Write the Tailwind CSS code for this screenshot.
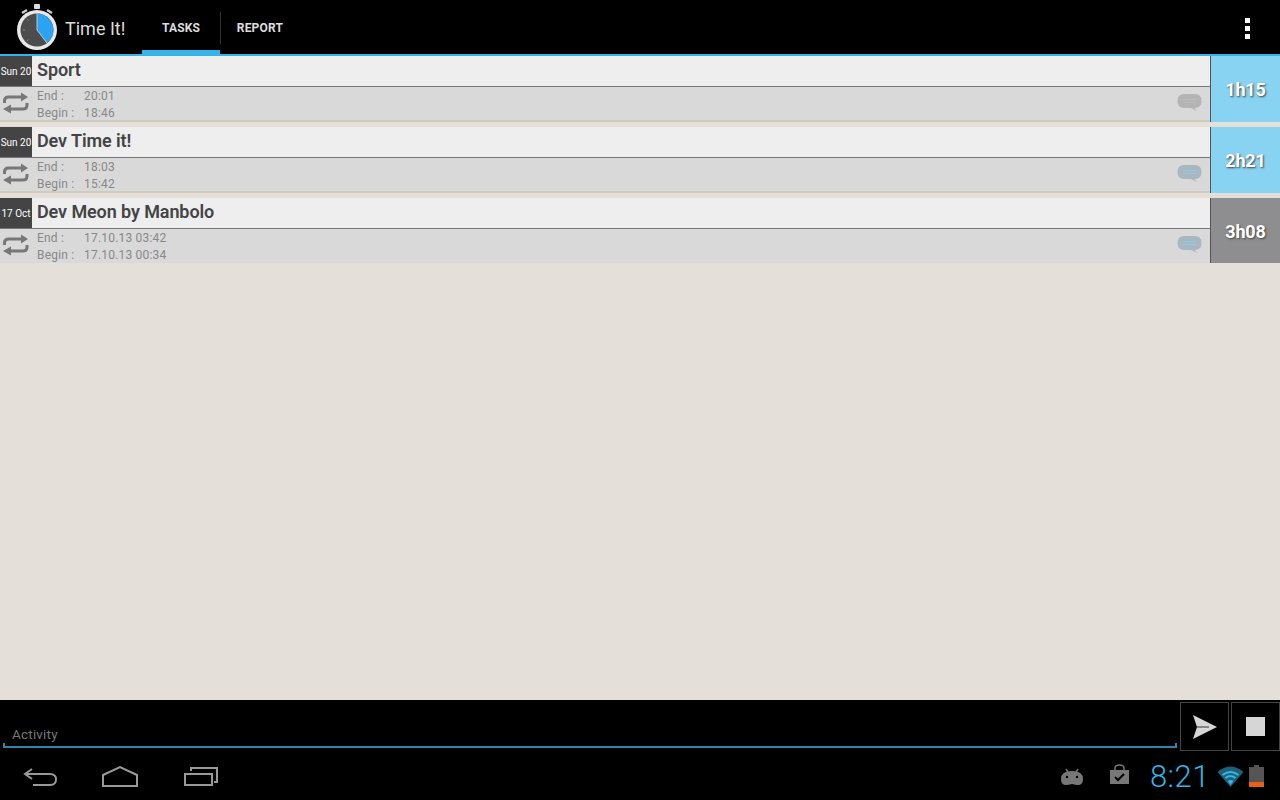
<!DOCTYPE html>
<html lang="en">
<head>
    <meta charset="UTF-8">
    <meta name="viewport" content="width=device-width,initial-scale=1.0">
    <title>Time It!</title>
    <script src="https://cdn.jsdelivr.net/npm/@tailwindcss/browser@4"></script>
</head>
<body class="w-[1280px] h-[800px] overflow-hidden flex flex-col bg-[#e4dfd8] font-['Roboto',sans-serif]">

<!-- Action bar -->
<header class="h-[56px] shrink-0 bg-black border-b-2 border-[#33b5e5] flex items-stretch">
    <svg class="ml-[15px] mt-[3px] w-[44px] h-[49px]" viewBox="0 0 44 49">
        <rect x="19" y="1" width="6" height="5" rx="1" fill="#ddd"/>
        <path d="M7 10l5-3M37 10l-5-3" stroke="#ccc" stroke-width="2.5"/>
        <circle cx="22" cy="27" r="20" fill="#e8e8e8"/>
        <circle cx="22" cy="27" r="16.500" fill="#4d4d4d"/>
        <path d="M22 27V10.500a16.500 16.500 0 0 1 10 29.600z" fill="#2aa4f0"/>
        <path d="M22 10.500V27l10 13.100" fill="none" stroke="#ddd" stroke-width="0.800"/>
        <path d="M8 27h2M12 16l1.500 1.500M12 38l1.500-1.500" stroke="#888" stroke-width="1"/>
    </svg>
    <div class="ml-[6px] w-[77px] pt-[1px] text-[18px] leading-[56px] text-[#dddddd]">Time It!</div>
    <div class="w-[78px] h-[54px] pt-[6px] flex items-center justify-center text-[12px] font-bold tracking-[0.1px] text-[#dddddd] border-b-4 border-[#33b5e5]">TASKS</div>
    <div class="w-px h-[32px] mt-[12px] bg-[#333]"></div>
    <div class="w-[78px] pt-[2px] flex items-center justify-center text-[12px] font-bold tracking-[0.2px] text-[#dddddd]">REPORT</div>
    <div class="ml-auto mr-[30px] mt-[18px] flex flex-col gap-[3px]">
        <span class="w-[5px] h-[5px] bg-white"></span>
        <span class="w-[5px] h-[5px] bg-white"></span>
        <span class="w-[5px] h-[5px] bg-white"></span>
    </div>
</header>

<!-- Task list -->
<main class="flex-1 flex flex-col">
    <!-- Sport -->
    <section class="h-[66px] mb-[5px] flex border-b-2 border-[#cfcbc2] bg-[#d9d9d9]">
        <div class="flex-1 flex flex-col">
            <div class="h-[31px] flex border-b border-[#777] bg-[#eeeeee]">
                <div class="w-[32px] bg-[#444] text-white text-[10px] leading-[31px] text-center whitespace-nowrap">Sun 20</div>
                <div class="pl-[5px] text-[18px] font-semibold tracking-[-0.1px] leading-[28px] text-[#444]">Sport</div>
            </div>
            <div class="flex-1 flex items-start">
                <svg class="w-[32px] h-[32px] shrink-0 mt-[1px]" viewBox="0 0 32 32">
                    <path d="M4.500 15v-2q0-4 4-4H22M27 15v2q0 4-4 4H10" fill="none" stroke="#777" stroke-width="3"/>
                    <path d="M21 4.500l7 4.500-7 4.500zM11 16.500L3 21l8 4.500z" fill="#777"/>
                </svg>
                <div class="pl-[5px] pt-[1px] text-[12px] leading-[17px] text-[#888] tracking-[0.2px]">
                    <div class="flex"><span class="w-[47px]">End :</span><span>20:01</span></div>
                    <div class="flex"><span class="w-[47px]">Begin :</span><span>18:46</span></div>
                </div>
                <svg class="ml-auto mr-[8px] mt-[7px] w-[25px] h-[17px]" viewBox="0 0 25 17">
                    <path d="M7 0h11q6.500 0 6.500 7T18 14h-.500l2.500 3-6-3H7Q.500 14 .500 7T7 0z" fill="#b4b4b4"/>
                    <path d="M6 5.500h13M6 8.500h13" stroke="#bcbcbc"/>
                </svg>
            </div>
        </div>
        <div class="w-[70px] -mb-[2px] border-l border-[#555] bg-[#87d3f1] flex items-center justify-center text-[18px] font-bold tracking-[-0.2px] text-white [text-shadow:1px_1px_2px_#444]">1h15</div>
    </section>

    <!-- Dev Time it! -->
    <section class="h-[66px] mb-[5px] flex border-b-2 border-[#cfcbc2] bg-[#d9d9d9]">
        <div class="flex-1 flex flex-col">
            <div class="h-[31px] flex border-b border-[#777] bg-[#eeeeee]">
                <div class="w-[32px] bg-[#444] text-white text-[10px] leading-[31px] text-center whitespace-nowrap">Sun 20</div>
                <div class="pl-[5px] text-[18px] font-semibold tracking-[-0.1px] leading-[28px] text-[#444]">Dev Time it!</div>
            </div>
            <div class="flex-1 flex items-start">
                <svg class="w-[32px] h-[32px] shrink-0 mt-[1px]" viewBox="0 0 32 32">
                    <path d="M4.500 15v-2q0-4 4-4H22M27 15v2q0 4-4 4H10" fill="none" stroke="#777" stroke-width="3"/>
                    <path d="M21 4.500l7 4.500-7 4.500zM11 16.500L3 21l8 4.500z" fill="#777"/>
                </svg>
                <div class="pl-[5px] pt-[1px] text-[12px] leading-[17px] text-[#888] tracking-[0.2px]">
                    <div class="flex"><span class="w-[47px]">End :</span><span>18:03</span></div>
                    <div class="flex"><span class="w-[47px]">Begin :</span><span>15:42</span></div>
                </div>
                <svg class="ml-auto mr-[8px] mt-[7px] w-[25px] h-[17px]" viewBox="0 0 25 17">
                    <path d="M7 0h11q6.500 0 6.500 7T18 14h-.500l2.500 3-6-3H7Q.500 14 .500 7T7 0z" fill="#a9b8c0"/>
                    <path d="M6 5.500h13M6 8.500h13" stroke="#8fcbe6"/>
                </svg>
            </div>
        </div>
        <div class="w-[70px] -mb-[2px] border-l border-[#555] bg-[#87d3f1] flex items-center justify-center text-[18px] font-bold tracking-[-0.2px] text-white [text-shadow:1px_1px_2px_#444]">2h21</div>
    </section>

    <!-- Dev Meon by Manbolo -->
    <section class="h-[65px] flex bg-[#d9d9d9]">
        <div class="flex-1 flex flex-col">
            <div class="h-[31px] flex border-b border-[#777] bg-[#eeeeee]">
                <div class="w-[32px] bg-[#444] text-white text-[10px] leading-[31px] text-center whitespace-nowrap">17 Oct</div>
                <div class="pl-[5px] text-[18px] font-semibold tracking-[-0.1px] leading-[28px] text-[#444]">Dev Meon by Manbolo</div>
            </div>
            <div class="flex-1 flex items-start">
                <svg class="w-[32px] h-[32px] shrink-0 mt-[1px]" viewBox="0 0 32 32">
                    <path d="M4.500 15v-2q0-4 4-4H22M27 15v2q0 4-4 4H10" fill="none" stroke="#777" stroke-width="3"/>
                    <path d="M21 4.500l7 4.500-7 4.500zM11 16.500L3 21l8 4.500z" fill="#777"/>
                </svg>
                <div class="pl-[5px] pt-[1px] text-[12px] leading-[17px] text-[#888] tracking-[0.2px]">
                    <div class="flex"><span class="w-[47px]">End :</span><span>17.10.13 03:42</span></div>
                    <div class="flex"><span class="w-[47px]">Begin :</span><span>17.10.13 00:34</span></div>
                </div>
                <svg class="ml-auto mr-[8px] mt-[7px] w-[25px] h-[17px]" viewBox="0 0 25 17">
                    <path d="M7 0h11q6.500 0 6.500 7T18 14h-.500l2.500 3-6-3H7Q.500 14 .500 7T7 0z" fill="#a9b8c0"/>
                    <path d="M6 5.500h13M6 8.500h13" stroke="#8fcbe6"/>
                </svg>
            </div>
        </div>
        <div class="w-[70px] pt-[1px] border-l border-[#555] bg-[#8e8e90] flex items-center justify-center text-[18px] font-bold tracking-[-0.2px] text-white [text-shadow:1px_1px_2px_#444]">3h08</div>
    </section>
</main>

<!-- Activity input -->
<div class="h-[50px] shrink-0 bg-black flex">
    <div class="relative w-[1174px] ml-[3px] h-[48px] border-b-2 border-[#2b86ad] pl-[9px] pt-[25px] text-[13.5px] leading-[18px] text-[#777] tracking-[0.2px]">
        Activity
        <span class="absolute left-0 bottom-0 w-[2px] h-[3px] bg-[#2b86ad]"></span>
        <span class="absolute right-0 bottom-0 w-[2px] h-[3px] bg-[#2b86ad]"></span>
    </div>
    <div class="relative z-10 ml-[3px] mt-[2px] h-[49px] flex gap-[2px]">
        <div class="w-[49px] border border-[#444] flex items-center justify-center">
            <svg class="w-[26px] h-[26px]" viewBox="0 0 26 26"><path d="M1 1l24 12L1 25l4-12z" fill="#d6d6d6"/><path d="M5 13h12" stroke="#333"/></svg>
        </div>
        <div class="w-[49px] border border-[#444] flex items-center justify-center">
            <span class="w-[19px] h-[19px] bg-[#d6d6d6]"></span>
        </div>
    </div>
</div>

<!-- System bar -->
<footer class="h-[50px] shrink-0 bg-black flex items-center">
    <svg class="ml-[23px] mt-[4px] w-[36px] h-[24px]" viewBox="0 0 36 24" fill="none" stroke="#999" stroke-width="2">
        <path d="M9 4L2 9l7 5M2 9h25q6 0 6 5.500T27 20H10"/>
    </svg>
    <svg class="ml-[42px] mt-[4px] w-[38px] h-[24px]" viewBox="0 0 38 24" fill="none" stroke="#999" stroke-width="2">
        <path d="M2 10L19 2l17 8v11H2z"/>
    </svg>
    <svg class="ml-[44px] mt-[4px] w-[36px] h-[24px]" viewBox="0 0 36 24" fill="none" stroke="#999" stroke-width="2">
        <path d="M8 6V3h26v14h-3"/><rect x="2" y="9" width="27" height="11"/>
    </svg>
    <svg class="ml-auto mt-[4px] w-[24px] h-[20px]" viewBox="0 0 24 20">
        <path d="M6 2l2 3M18 2l-2 3" stroke="#777" stroke-width="1.500"/>
        <path d="M1 12q0-8 11-8t11 8q0 6-5 6-3 0-6-1-3 1-6 1-5 0-5-6z" fill="#777"/>
        <circle cx="7" cy="10" r="1.200" fill="#000"/><circle cx="17" cy="10" r="1.200" fill="#000"/>
    </svg>
    <svg class="ml-[25px] mb-[2px] w-[21px] h-[21px]" viewBox="0 0 21 21">
        <path d="M1 6h19v14H1z" fill="#777"/>
        <path d="M6 6V4q0-3 4.500-3T15 4v2" fill="none" stroke="#777" stroke-width="1.500"/>
        <path d="M6 13l3 3 6-6" fill="none" stroke="#000" stroke-width="2"/>
    </svg>
    <div class="ml-[20px] mt-[3px] text-[31px] leading-[50px] font-light text-[#33b5e5] tracking-[0.5px]">8:21</div>
    <svg class="ml-[7px] mt-[2px] w-[27px] h-[22px]" viewBox="0 0 26 22" fill="none">
        <path d="M0 7q13-11 26 0L13 22z" fill="#1f5f78"/>
        <path d="M5 10q8-6 16 0M8 13q5-4 10 0" stroke="#33b5e5" stroke-width="2"/>
        <path d="M10 16q3-2 6 0l-3 4z" fill="#33b5e5"/>
    </svg>
    <svg class="ml-[5px] mr-[16px] mt-[1px] w-[15px] h-[22px]" viewBox="0 0 15 22">
        <rect x="5" y="0" width="5" height="2" fill="#555"/>
        <rect x="0" y="2" width="15" height="20" fill="#555"/>
        <rect x="0" y="17" width="15" height="5" fill="#e8610f"/>
    </svg>
</footer>
</body>
</html>
